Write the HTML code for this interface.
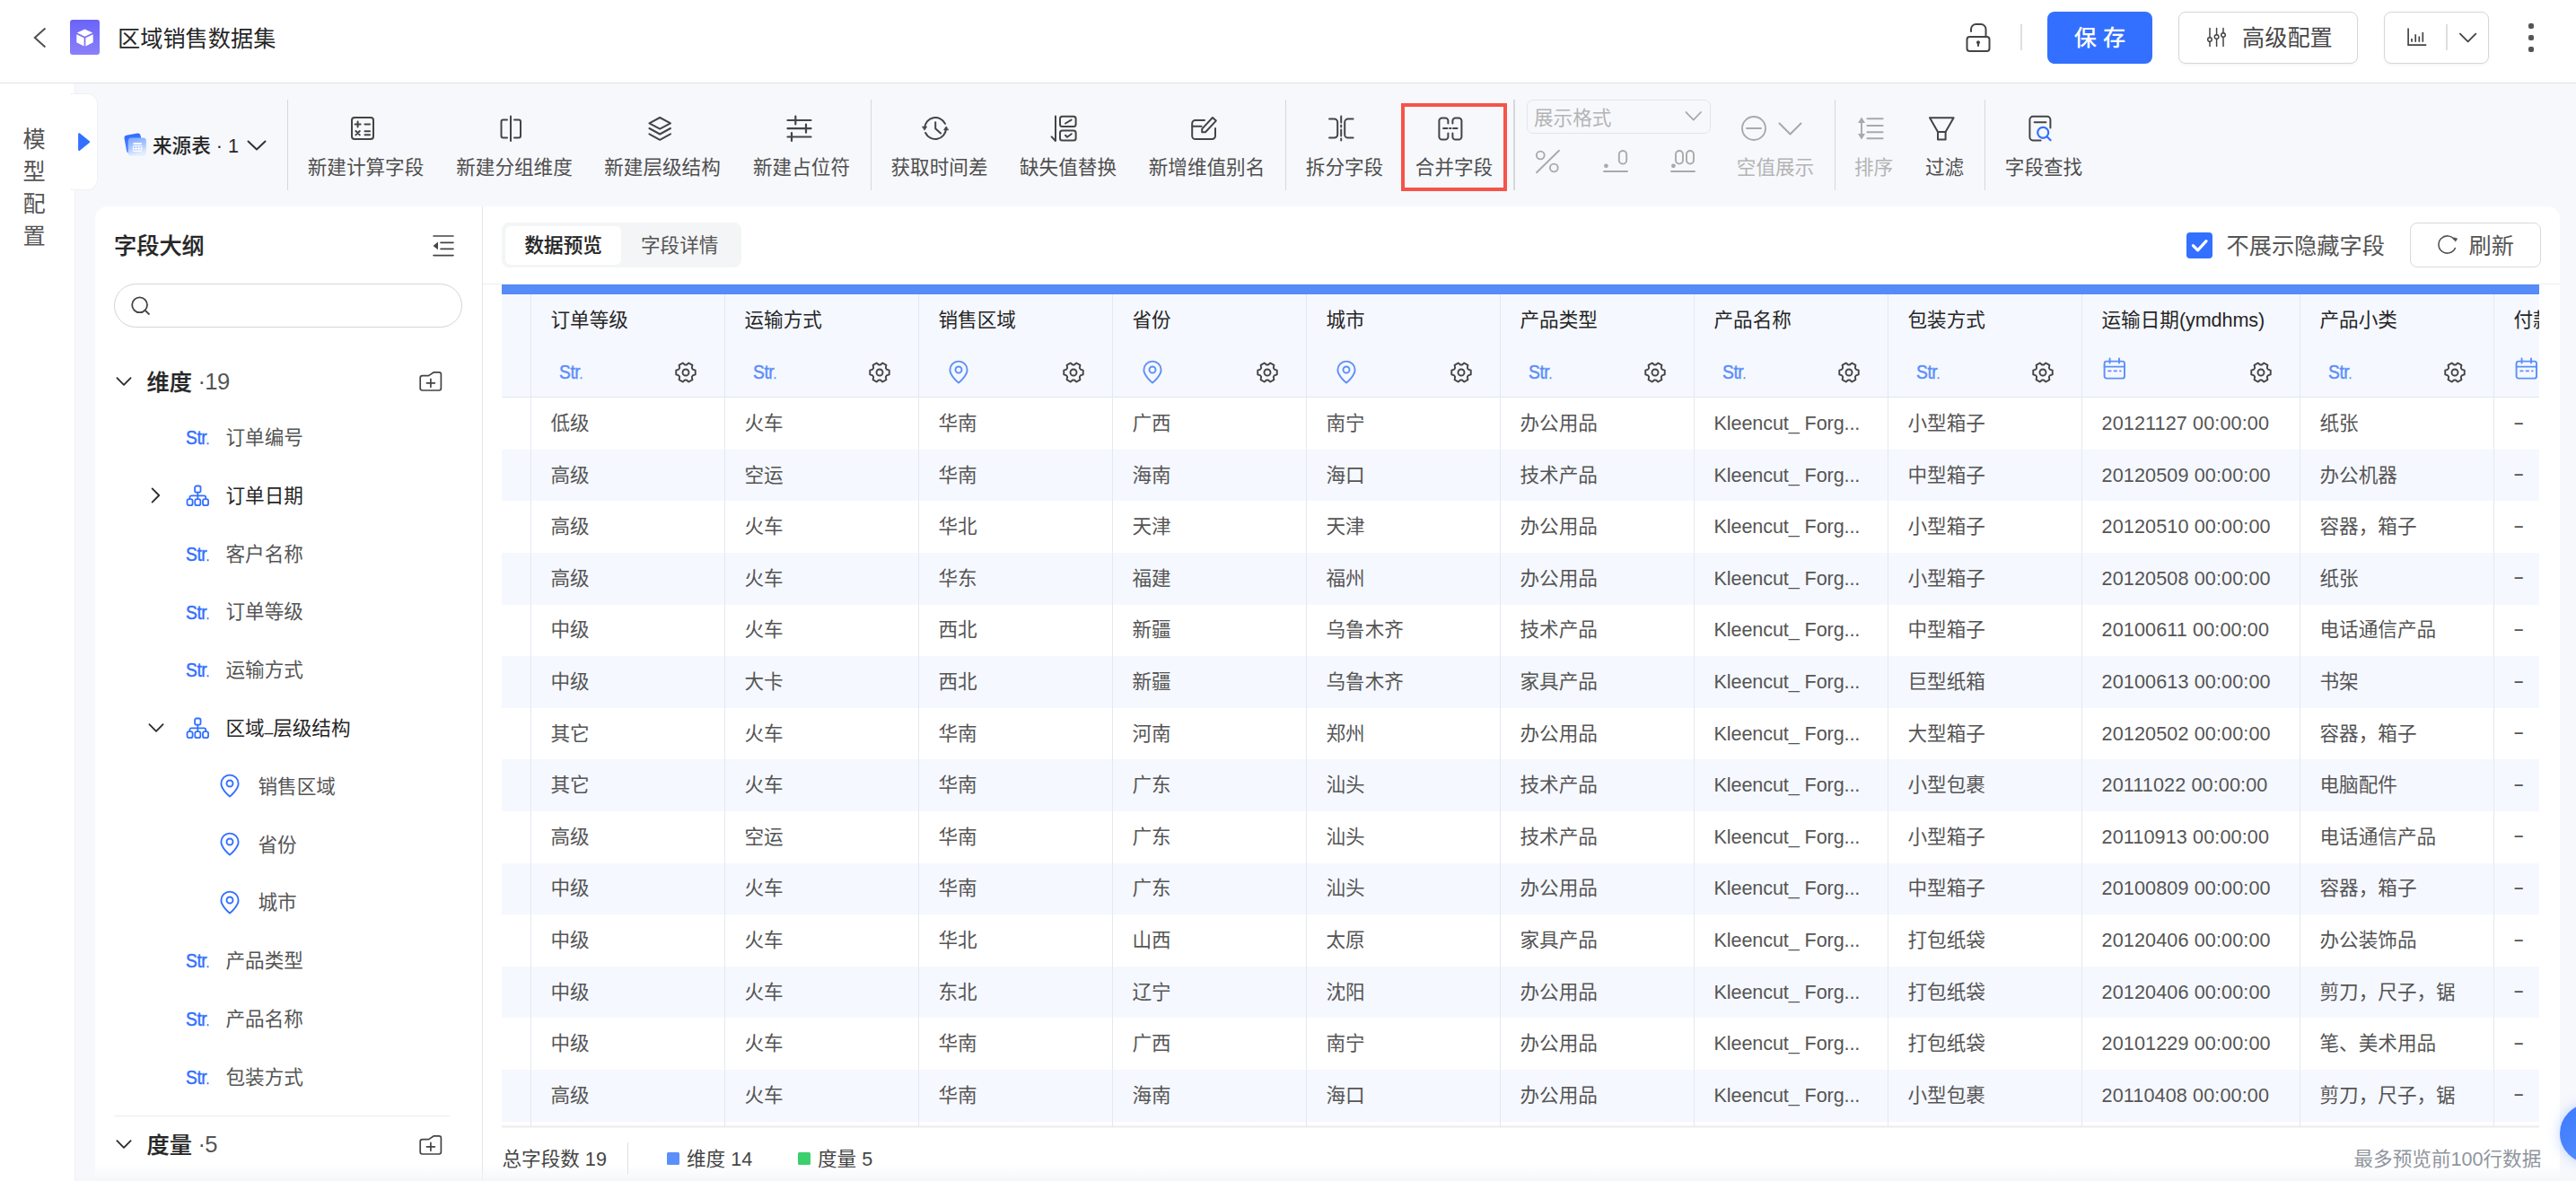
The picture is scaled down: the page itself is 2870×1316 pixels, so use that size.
<!DOCTYPE html>
<html lang="zh-CN"><head><meta charset="utf-8"><title>区域销售数据集</title>
<style>
*{box-sizing:border-box;margin:0;padding:0}
html,body{width:2870px;height:1316px;overflow:hidden}
body{background:#f7f8fc;font-family:"Liberation Sans","Noto Sans CJK SC",sans-serif;color:#262626;position:relative;-webkit-font-smoothing:antialiased}
.abs{position:absolute}
.t{position:absolute;white-space:nowrap;line-height:32px;height:32px}
svg{position:absolute;overflow:visible}
.hdr{position:absolute;left:0;top:0;width:2870px;height:93px;background:#fff;border-bottom:1px solid #e1e2e6}
.side{position:absolute;left:0;top:93px;width:83.5px;height:1223px;background:#fff;border-right:1px solid #f0f0f3}
.bulge{position:absolute;left:80px;top:104.5px;width:28px;height:106.5px;background:#fff;border-radius:0 11px 11px 0;box-shadow:0 0 0 1px #f1f1f3}
.vdiv{position:absolute;width:1.5px;background:#d6d8dc;top:111px;height:101px}
.lab{position:absolute;top:171.2px;height:32px;line-height:32px;font-size:21.6px;color:#4f4f4f;white-space:nowrap;transform:translateX(-50%)}
.lab.dis{color:#b4b4b4}
.panel{position:absolute;left:106px;top:230px;width:2746px;height:1100px;background:#fff;border-radius:14px}
.tree{position:absolute;font-size:21.6px;line-height:32px;height:32px;color:#555555;white-space:nowrap}
.tree.dk{color:#262626}
.str{position:absolute;font-size:22.4px;line-height:28px;height:28px;color:#3370ff;transform-origin:0 50%;transform:scaleX(.86);letter-spacing:-.5px;white-space:nowrap;-webkit-text-stroke:.45px #3370ff}
.str.h{color:#5b8ff9;-webkit-text-stroke:.45px #5b8ff9}
.th{position:absolute;font-size:21.6px;line-height:32px;height:32px;color:#262626;white-space:nowrap;top:341.2px}
.td{position:absolute;font-size:21.6px;line-height:32px;height:32px;color:#555555;white-space:nowrap}
.row{position:absolute;left:559px;width:2270px;height:57.6px}
.row.odd{background:#f5f8fe}
.cb{position:absolute;width:1px;top:327px;height:928px;background:#e4e8f0}
</style></head>
<body>
<div class="hdr"></div>
<svg style="left:30px;top:26px" width="32" height="32" viewBox="0 0 32 32" fill="none" stroke="#505050" stroke-width="2" stroke-linecap="round" stroke-linejoin="round" ><path d="M20.4 5.6 L8.8 16 L20.4 26.4" stroke-linecap="butt" stroke-linejoin="miter"/></svg>
<div class="abs" style="left:78px;top:22px;width:32.5px;height:39px;border-radius:3px;background:linear-gradient(180deg,#6a63f8 0%,#8a80fa 100%)"></div>
<svg style="left:85px;top:31.8px" width="20" height="20" viewBox="0 0 20 20" fill="none" stroke="none" stroke-width="2" stroke-linecap="round" stroke-linejoin="round" ><path d="M9.5 0.6 L18.2 4.6 L9.5 8.8 L0.8 4.6 Z" fill="#fff" stroke="none"/><path d="M0.3 6.2 L8.6 10.2 L8.6 19.4 L0.3 15.2 Z" fill="#fff" stroke="none"/><path d="M18.7 6.2 L10.4 10.2 L10.4 19.4 L18.7 15.2 Z" fill="#fff" stroke="none"/></svg>
<div class="t" style="left:131px;top:27.4px;font-size:25.2px;color:#262626">区域销售数据集</div>
<svg style="left:2186px;top:22px" width="36" height="40" viewBox="0 0 36 40" fill="none" stroke="#444444" stroke-width="2" stroke-linecap="round" stroke-linejoin="round" ><rect x="5.5" y="19" width="25" height="16" rx="3"/><path d="M10 13 V10.5 A5.5 5.5 0 0 1 15.5 5 H21 A5.5 5.5 0 0 1 26.5 10.5 V19"/><circle cx="18" cy="25.3" r="2" fill="#444444" stroke="none"/><path d="M18 26 V29"/></svg>
<div class="abs" style="left:2251px;top:27px;width:2px;height:29px;background:#dedfe3"></div>
<div class="abs" style="left:2281px;top:13px;width:117px;height:58px;border-radius:8px;background:#3370ff"></div>
<div class="t" style="left:2281px;width:117px;text-align:center;top:26px;font-size:25.2px;color:#fff;font-weight:500">保 存</div>
<div class="abs" style="left:2427px;top:13px;width:200px;height:58px;border-radius:8px;background:#fff;border:1.5px solid #d6d6d9;box-shadow:0 2px 3px rgba(0,0,0,.04)"></div>
<svg style="left:2456px;top:28px" width="28" height="28" viewBox="0 0 28 28" fill="none" stroke="#444444" stroke-width="1.5" stroke-linecap="round" stroke-linejoin="round" ><path d="M6 3.5 V13.5 M6 18.5 V23.5 M13.6 3.5 V10.5 M13.6 15.5 V23.5 M21 3.5 V8.5 M21 13.5 V23.5"/><circle cx="6" cy="16" r="2.3"/><circle cx="13.6" cy="13" r="2.3"/><circle cx="21" cy="11" r="2.3"/></svg>
<div class="t" style="left:2498px;top:26px;font-size:25.2px;color:#484848">高级配置</div>
<div class="abs" style="left:2656px;top:13px;width:117px;height:58px;border-radius:8px;background:#fff;border:1.5px solid #d6d6d9;box-shadow:0 2px 3px rgba(0,0,0,.04)"></div>
<svg style="left:2680px;top:30px" width="26" height="24" viewBox="0 0 26 24" fill="none" stroke="#444444" stroke-width="1.7" stroke-linecap="round" stroke-linejoin="round" ><path d="M3.1 2.4 V20.1 H22.4" stroke-linecap="square" stroke-linejoin="miter"/><path d="M7 13 V16.8 M11.2 8.3 V16.8 M15.3 10.4 V16.8 M19.3 6 V16.8" stroke-linecap="butt"/></svg>
<div class="abs" style="left:2725px;top:27px;width:2px;height:29px;background:#dedfe3"></div>
<svg style="left:2737px;top:34px" width="26" height="16" viewBox="0 0 26 16" fill="none" stroke="#444444" stroke-width="1.8" stroke-linecap="round" stroke-linejoin="round" ><path d="M3.4 3.2 L12.6 12.4 L21.8 3.2" stroke-linecap="butt"/></svg>
<div class="abs" style="left:2817px;top:25.8px;width:6.2px;height:6.2px;border-radius:2px;background:#555"></div>
<div class="abs" style="left:2817px;top:38.8px;width:6.2px;height:6.2px;border-radius:2px;background:#555"></div>
<div class="abs" style="left:2817px;top:51.8px;width:6.2px;height:6.2px;border-radius:2px;background:#555"></div>
<div class="side"></div><div class="bulge"></div><div class="abs" style="left:78px;top:105.5px;width:6px;height:104.5px;background:#fff"></div>
<div class="t" style="left:25.5px;top:138.6px;font-size:25.2px;color:#555555">模</div>
<div class="t" style="left:25.5px;top:174.6px;font-size:25.2px;color:#555555">型</div>
<div class="t" style="left:25.5px;top:210.6px;font-size:25.2px;color:#555555">配</div>
<div class="t" style="left:25.5px;top:246.6px;font-size:25.2px;color:#555555">置</div>
<svg style="left:86px;top:147px" width="16" height="22" viewBox="0 0 16 22" fill="none" stroke="none" stroke-width="2" stroke-linecap="round" stroke-linejoin="round" ><path d="M2.2 2.4 L13 11.2 L2.2 20 Z" fill="#3370ff" stroke="#3370ff" stroke-width="2.2" stroke-linejoin="round"/></svg>
<svg style="left:136px;top:146px" width="30" height="30" viewBox="0 0 30 30" fill="none" stroke="none" stroke-width="2" stroke-linecap="round" stroke-linejoin="round" ><defs><linearGradient id="sg1" x1="0" y1="0" x2="0" y2="1"><stop offset="0" stop-color="#2f6bff"/><stop offset="1" stop-color="#5a8dff"/></linearGradient><linearGradient id="sg2" x1="0" y1="0" x2="0.3" y2="1"><stop offset="0" stop-color="#7aa8ff"/><stop offset="0.55" stop-color="#a9c6ff"/><stop offset="1" stop-color="#e3edff"/></linearGradient></defs><rect x="3.6" y="3.4" width="18.4" height="20" rx="3" transform="rotate(-10 12.8 13.4)" fill="url(#sg1)" stroke="none"/><rect x="6.8" y="7.6" width="20.2" height="19.8" rx="3.6" fill="url(#sg2)" stroke="none"/><path d="M12.6 14 H21.6" stroke="#fff" stroke-width="2" stroke-linecap="butt"/><path d="M12.4 16.6 H21.8 V22.4 H12.4 Z M12.4 19.5 H21.8 M15.5 16.6 V22.4 M18.7 16.6 V22.4" stroke="#fff" stroke-width="1" stroke-linecap="butt" stroke-linejoin="miter"/></svg>
<div class="t" style="left:170px;top:146.8px;font-size:21.6px;font-weight:500;color:#262626">来源表 · 1</div>
<svg style="left:274px;top:155px" width="24" height="14" viewBox="0 0 24 14" fill="none" stroke="#333333" stroke-width="2" stroke-linecap="round" stroke-linejoin="round" ><path d="M2.5 2.5 L12 11.5 L21.5 2.5"/></svg>
<div class="vdiv" style="left:319.5px"></div>
<div class="vdiv" style="left:969.5px"></div>
<div class="vdiv" style="left:1431.5px"></div>
<div class="vdiv" style="left:1686px"></div>
<div class="vdiv" style="left:2043.5px"></div>
<div class="vdiv" style="left:2210.5px"></div>
<svg style="left:390px;top:129px" width="28" height="28" viewBox="0 0 28 28" fill="none" stroke="#444444" stroke-width="2" stroke-linecap="round" stroke-linejoin="round" ><rect x="2" y="2" width="24" height="24" rx="3"/><path d="M5.6 9.6 H11.6 M8.6 6.6 V12.6 M16.5 9.6 H22 M6.4 17 L10.8 21.4 M10.8 17 L6.4 21.4 M16.5 17.3 H22 M16.5 21.3 H22"/></svg>
<div class="lab" style="left:407.5px">新建计算字段</div>
<svg style="left:555px;top:127px" width="28" height="32" viewBox="0 0 28 32" fill="none" stroke="#444444" stroke-width="2" stroke-linecap="round" stroke-linejoin="round" ><path d="M10 6.5 H5.5 A2 2 0 0 0 3.5 8.5 V24.5 A2 2 0 0 0 5.5 26.5 H10"/><path d="M18 6.5 H23 A2 2 0 0 1 25 8.5 V24.5 A2 2 0 0 1 23 26.5 H18"/><path d="M14 2.5 V30"/></svg>
<div class="lab" style="left:573px">新建分组维度</div>
<svg style="left:721px;top:128px" width="28" height="30" viewBox="0 0 28 30" fill="none" stroke="#444444" stroke-width="2" stroke-linecap="round" stroke-linejoin="round" ><path d="M14.2 3 L26 9.3 L14.2 15.6 L2.4 9.3 Z"/><path d="M2.4 15 L14.2 21.5 L26 15"/><path d="M2.4 21.3 L14.2 27.8 L26 21.3"/></svg>
<div class="lab" style="left:738px">新建层级结构</div>
<svg style="left:875px;top:127px" width="30" height="32" viewBox="0 0 30 32" fill="none" stroke="#444444" stroke-width="2.2" stroke-linecap="round" stroke-linejoin="round" ><path d="M2.5 7 H28.5 M2.5 16.2 H28.5 M2.5 25.5 H28.5"/><path d="M11.3 2.5 V11.5 M23 11.7 V20.7 M7 21 V30"/></svg>
<div class="lab" style="left:893px">新建占位符</div>
<svg style="left:1026px;top:128px" width="32" height="30" viewBox="0 0 32 30" fill="none" stroke="#444444" stroke-width="2" stroke-linecap="round" stroke-linejoin="round" ><path d="M27 9.9 A12 12 0 0 0 4.2 14.4"/><path d="M5.1 20 A12 12 0 0 0 28 15.6"/><path d="M1.8 13.2 L6.6 13.2 L4.2 16.8 Z" fill="#444444" stroke-width=".8"/><path d="M30.4 16.8 L25.6 16.8 L28 13.2 Z" fill="#444444" stroke-width=".8"/><path d="M16.2 8.3 V15.2 L22 20.6"/></svg>
<div class="lab" style="left:1046.5px">获取时间差</div>
<svg style="left:1168px;top:127px" width="32" height="32" viewBox="0 0 32 32" fill="none" stroke="#444444" stroke-width="2" stroke-linecap="round" stroke-linejoin="round" ><path d="M8 2.5 V30 L3.6 25.4"/><rect x="13" y="2.8" width="17.6" height="11.2" rx="2.5"/><rect x="13" y="18.4" width="17.6" height="11.2" rx="2.5"/><path d="M19 10.5 L25.6 6.6"/><path d="M19 23.7 L21 25.8 L25.8 22.2"/></svg>
<div class="lab" style="left:1190px">缺失值替换</div>
<svg style="left:1325px;top:128px" width="32" height="30" viewBox="0 0 32 30" fill="none" stroke="#444444" stroke-width="2" stroke-linecap="round" stroke-linejoin="round" ><path d="M17 6 H6.8 A3.6 3.6 0 0 0 3.2 9.6 V23.4 A3.6 3.6 0 0 0 6.8 27 H25.4 A3.6 3.6 0 0 0 29 23.4 V15"/><path d="M3.4 12.8 H13.6"/><path d="M26 3 L29.8 6.6 L18 19.2 H14.2 V15.6 Z"/></svg>
<div class="lab" style="left:1344.5px">新增维值别名</div>
<svg style="left:1478px;top:127px" width="32" height="32" viewBox="0 0 32 32" fill="none" stroke="#444444" stroke-width="2" stroke-linecap="round" stroke-linejoin="round" ><path d="M3 5.6 H8.6 A3.6 3.6 0 0 1 12.2 9.2 V23 A3.6 3.6 0 0 1 8.6 26.6 H3"/><path d="M29.6 5.6 H23.8 A3.6 3.6 0 0 0 20.2 9.2 V23 A3.6 3.6 0 0 0 23.8 26.6 H29.6"/><path d="M16.2 2.5 V30" stroke-dasharray="7 3 2 3"/></svg>
<div class="lab" style="left:1498px">拆分字段</div>
<div class="abs" style="left:1561px;top:115px;width:118px;height:98px;border:4px solid #f5544a"></div>
<svg style="left:1601px;top:128px" width="30" height="30" viewBox="0 0 30 30" fill="none" stroke="#444444" stroke-width="2" stroke-linecap="round" stroke-linejoin="round" ><path d="M12.4 9.6 V6.6 A3.2 3.2 0 0 0 9.2 3.4 H5.6 A3.2 3.2 0 0 0 2.4 6.6 V24.4 A3.2 3.2 0 0 0 5.6 27.6 H9.2 A3.2 3.2 0 0 0 12.4 24.4 V20.4"/><path d="M17.4 9.6 V6.6 A3.2 3.2 0 0 1 20.6 3.4 H24.2 A3.2 3.2 0 0 1 27.4 6.6 V24.4 A3.2 3.2 0 0 1 24.2 27.6 H20.6 A3.2 3.2 0 0 1 17.4 24.4 V20.4"/><path d="M7 15 H23.4" stroke-dasharray="4.6 2.4 1.6 2.4" stroke-width="1.8"/></svg>
<div class="lab" style="left:1620px">合并字段</div>
<div class="abs" style="left:1701px;top:111px;width:205px;height:38px;border:1.5px solid #e3e5ea;border-radius:7px"></div>
<div class="t" style="left:1709px;top:115.6px;font-size:21.6px;color:#b4b4b4">展示格式</div>
<svg style="left:1876px;top:122px" width="22" height="16" viewBox="0 0 22 16" fill="none" stroke="#a9a9a9" stroke-width="1.8" stroke-linecap="round" stroke-linejoin="round" ><path d="M2.5 3 L10.8 11.6 L19 3"/></svg>
<svg style="left:1710px;top:166px" width="30" height="28" viewBox="0 0 30 28" fill="none" stroke="#a9a9a9" stroke-width="1.9" stroke-linecap="round" stroke-linejoin="round" ><path d="M2 26.2 L27 1.8"/><circle cx="6.3" cy="7" r="4.4"/><circle cx="21.3" cy="21" r="4.4"/></svg>
<svg style="left:1785px;top:165px" width="30" height="28" viewBox="0 0 30 28" fill="none" stroke="#a9a9a9" stroke-width="1.9" stroke-linecap="round" stroke-linejoin="round" ><circle cx="4.4" cy="19.8" r="2.4" fill="#a9a9a9" stroke="none"/><rect x="18.8" y="3" width="8.4" height="14.6" rx="4.2"/><path d="M2 26 H28"/></svg>
<svg style="left:1860px;top:165px" width="30" height="28" viewBox="0 0 30 28" fill="none" stroke="#a9a9a9" stroke-width="1.9" stroke-linecap="round" stroke-linejoin="round" ><circle cx="4.4" cy="19.8" r="2.4" fill="#a9a9a9" stroke="none"/><rect x="7" y="3" width="8" height="14.6" rx="4"/><rect x="19" y="3" width="8" height="14.6" rx="4"/><path d="M2 26 H28"/></svg>
<svg style="left:1939px;top:128px" width="30" height="30" viewBox="0 0 30 30" fill="none" stroke="#a9a9a9" stroke-width="1.9" stroke-linecap="round" stroke-linejoin="round" ><circle cx="15" cy="15" r="13"/><path d="M7 15 H23"/></svg>
<svg style="left:1980px;top:135px" width="28" height="18" viewBox="0 0 28 18" fill="none" stroke="#a9a9a9" stroke-width="2" stroke-linecap="round" stroke-linejoin="round" ><path d="M2.5 2.5 L14.5 14.5 L26.5 2.5"/></svg>
<div class="lab dis" style="left:1978px">空值展示</div>
<svg style="left:2068px;top:129px" width="32" height="28" viewBox="0 0 32 28" fill="none" stroke="#a9a9a9" stroke-width="1.9" stroke-linecap="round" stroke-linejoin="round" ><path d="M6 6 V22"/><path d="M6 1.6 L10 8 H2 Z M6 26.4 L10 20 H2 Z" fill="#a9a9a9" stroke="none"/><path d="M12.4 3.2 H29.6 M12.4 11 H29.6 M12.4 18.2 H29.6 M12.4 25.2 H29.6"/></svg>
<div class="lab dis" style="left:2087.5px">排序</div>
<svg style="left:2147px;top:128px" width="32" height="30" viewBox="0 0 32 30" fill="none" stroke="#444444" stroke-width="2" stroke-linecap="round" stroke-linejoin="round" ><path d="M3 3.2 H29.6 L20.6 19 H12 Z"/><path d="M12 19 V27.4 H20.6 V19"/></svg>
<div class="lab" style="left:2166.5px">过滤</div>
<svg style="left:2258px;top:127px" width="30" height="32" viewBox="0 0 30 32" fill="none" stroke="#444444" stroke-width="2" stroke-linecap="round" stroke-linejoin="round" ><path d="M15.6 29.4 H7 A3.6 3.6 0 0 1 3.4 25.8 V6.4 A3.6 3.6 0 0 1 7 2.8 H22.8 A3.6 3.6 0 0 1 26.4 6.4 V15.4"/><path d="M8.6 9.2 H21.4"/><circle cx="18.2" cy="20.8" r="6" stroke="#3370ff" stroke-width="2.2"/><path d="M22.6 25.2 L26.6 29.2" stroke="#3370ff" stroke-width="2.2"/></svg>
<div class="lab" style="left:2277px">字段查找</div>
<div class="panel"></div>
<div class="abs" style="left:537px;top:230px;width:1px;height:1090px;background:#e4e5e8"></div>
<div class="abs" style="left:538px;top:316px;width:2314px;height:1px;background:#eeeff1"></div>
<div class="t" style="left:127px;top:258px;font-size:25.2px;font-weight:500;-webkit-text-stroke:.2px #262626;color:#262626">字段大纲</div>
<svg style="left:480px;top:260px" width="28" height="28" viewBox="0 0 28 28" fill="none" stroke="#444444" stroke-width="1.6" stroke-linecap="round" stroke-linejoin="round" ><path d="M3 3 H25 M11 10.4 H25 M11 17.4 H25 M3 24.6 H25"/><path d="M8 9.6 V18.2 L2.6 13.9 Z" fill="#444444" stroke="none"/></svg>
<div class="abs" style="left:127px;top:316px;width:388px;height:49px;border:1.5px solid #d4d4d6;border-radius:25px;background:#fff"></div>
<svg style="left:144px;top:329px" width="26" height="26" viewBox="0 0 26 26" fill="none" stroke="#444444" stroke-width="1.8" stroke-linecap="round" stroke-linejoin="round" ><circle cx="11.6" cy="10.8" r="8.4"/><path d="M17.8 17 L22 21"/></svg>
<svg style="left:127.5px;top:418.5px" width="20" height="14" viewBox="0 0 20 14" fill="none" stroke="#2b2b2b" stroke-width="1.8" stroke-linecap="round" stroke-linejoin="round" ><path d="M2.4 2.2 L10 9.8 L17.6 2.2"/></svg>
<div class="t" style="left:163.5px;top:409.5px;font-size:25.2px;font-weight:500;-webkit-text-stroke:.2px #262626;color:#262626">维度<span style="font-weight:400;-webkit-text-stroke:0;color:#555555;margin-left:6.5px;font-size:25.6px;letter-spacing:-.6px;position:relative;top:-.8px">·19</span></div>
<svg style="left:465.5px;top:411.5px" width="28" height="26" viewBox="0 0 28 26" fill="none" stroke="#444444" stroke-width="1.7" stroke-linecap="round" stroke-linejoin="round" ><path d="M11.6 6.6 H4.6 A2.4 2.4 0 0 0 2.2 9 V20.6 A2.4 2.4 0 0 0 4.6 23 H23 A2.4 2.4 0 0 0 25.4 20.6 V5 A2.2 2.2 0 0 0 23.2 2.8 H17.4 Z"/><path d="M9.4 14.8 H18.4 M13.9 10.4 V19.2"/></svg>
<div class="str" style="left:207px;top:474.1px">Str<span style="font-size:14px;margin-left:-.6px">.</span></div>
<div class="tree" style="left:251.5px;top:472.0px">订单编号</div>
<svg style="left:206.5px;top:539.9px" width="26.6" height="24.7" viewBox="0 0 28 26" fill="none" stroke="#3370ff" stroke-width="1.9" stroke-linecap="round" stroke-linejoin="round" preserveAspectRatio="none"><rect x="10.6" y="1.6" width="6.8" height="7.4" rx="2"/><path d="M14 9 V13 M4.6 17 V15 A2 2 0 0 1 6.6 13 H21.4 A2 2 0 0 1 23.4 15 V17 M14 13 V17"/><rect x="1.6" y="17" width="6.4" height="7.4" rx="2.4"/><rect x="10.8" y="17" width="6.4" height="7.4" rx="2.4"/><rect x="20" y="17" width="6.4" height="7.4" rx="2.4"/></svg>
<svg style="left:167px;top:542.4px" width="14" height="20" viewBox="0 0 14 20" fill="none" stroke="#2b2b2b" stroke-width="1.8" stroke-linecap="round" stroke-linejoin="round" ><path d="M2.6 2.4 L10.2 10 L2.6 17.6"/></svg>
<div class="tree dk" style="left:251.5px;top:536.8px">订单日期</div>
<div class="str" style="left:207px;top:603.7px">Str<span style="font-size:14px;margin-left:-.6px">.</span></div>
<div class="tree" style="left:251.5px;top:601.6px">客户名称</div>
<div class="str" style="left:207px;top:668.5px">Str<span style="font-size:14px;margin-left:-.6px">.</span></div>
<div class="tree" style="left:251.5px;top:666.4px">订单等级</div>
<div class="str" style="left:207px;top:733.3px">Str<span style="font-size:14px;margin-left:-.6px">.</span></div>
<div class="tree" style="left:251.5px;top:731.2px">运输方式</div>
<svg style="left:206.5px;top:799.1px" width="26.6" height="24.7" viewBox="0 0 28 26" fill="none" stroke="#3370ff" stroke-width="1.9" stroke-linecap="round" stroke-linejoin="round" preserveAspectRatio="none"><rect x="10.6" y="1.6" width="6.8" height="7.4" rx="2"/><path d="M14 9 V13 M4.6 17 V15 A2 2 0 0 1 6.6 13 H21.4 A2 2 0 0 1 23.4 15 V17 M14 13 V17"/><rect x="1.6" y="17" width="6.4" height="7.4" rx="2.4"/><rect x="10.8" y="17" width="6.4" height="7.4" rx="2.4"/><rect x="20" y="17" width="6.4" height="7.4" rx="2.4"/></svg>
<svg style="left:164px;top:804.6px" width="20" height="14" viewBox="0 0 20 14" fill="none" stroke="#2b2b2b" stroke-width="1.8" stroke-linecap="round" stroke-linejoin="round" ><path d="M2.4 2.2 L10 9.8 L17.6 2.2"/></svg>
<div class="tree dk" style="left:251.5px;top:796.0px">区域<span style="font-size:17px;position:relative;top:-4.5px">_</span>层级结构</div>
<svg style="left:244px;top:862.1px" width="24" height="28" viewBox="0 0 24 28" fill="none" stroke="#3370ff" stroke-width="1.9" stroke-linecap="round" stroke-linejoin="round" ><path d="M12 25.6 C12 25.6 2.4 17.6 2.4 11.2 A9.6 9.6 0 0 1 21.6 11.2 C21.6 17.6 12 25.6 12 25.6 Z"/><circle cx="12" cy="11" r="3.5"/></svg>
<div class="tree" style="left:287.5px;top:860.8px">销售区域</div>
<svg style="left:244px;top:926.9000000000001px" width="24" height="28" viewBox="0 0 24 28" fill="none" stroke="#3370ff" stroke-width="1.9" stroke-linecap="round" stroke-linejoin="round" ><path d="M12 25.6 C12 25.6 2.4 17.6 2.4 11.2 A9.6 9.6 0 0 1 21.6 11.2 C21.6 17.6 12 25.6 12 25.6 Z"/><circle cx="12" cy="11" r="3.5"/></svg>
<div class="tree" style="left:287.5px;top:925.6px">省份</div>
<svg style="left:244px;top:991.7px" width="24" height="28" viewBox="0 0 24 28" fill="none" stroke="#3370ff" stroke-width="1.9" stroke-linecap="round" stroke-linejoin="round" ><path d="M12 25.6 C12 25.6 2.4 17.6 2.4 11.2 A9.6 9.6 0 0 1 21.6 11.2 C21.6 17.6 12 25.6 12 25.6 Z"/><circle cx="12" cy="11" r="3.5"/></svg>
<div class="tree" style="left:287.5px;top:990.4px">城市</div>
<div class="str" style="left:207px;top:1057.3px">Str<span style="font-size:14px;margin-left:-.6px">.</span></div>
<div class="tree" style="left:251.5px;top:1055.2px">产品类型</div>
<div class="str" style="left:207px;top:1122.1px">Str<span style="font-size:14px;margin-left:-.6px">.</span></div>
<div class="tree" style="left:251.5px;top:1120.0px">产品名称</div>
<div class="str" style="left:207px;top:1186.9px">Str<span style="font-size:14px;margin-left:-.6px">.</span></div>
<div class="tree" style="left:251.5px;top:1184.8px">包装方式</div>
<div class="abs" style="left:127px;top:1242.5px;width:374px;height:1.5px;background:#ebecef"></div>
<svg style="left:127.5px;top:1269px" width="20" height="14" viewBox="0 0 20 14" fill="none" stroke="#2b2b2b" stroke-width="1.8" stroke-linecap="round" stroke-linejoin="round" ><path d="M2.4 2.2 L10 9.8 L17.6 2.2"/></svg>
<div class="t" style="left:163.5px;top:1259.5px;font-size:25.2px;font-weight:500;-webkit-text-stroke:.2px #262626;color:#262626">度量<span style="font-weight:400;-webkit-text-stroke:0;color:#555555;margin-left:6.5px;font-size:25.6px;letter-spacing:-.6px;position:relative;top:-.8px">·5</span></div>
<svg style="left:465.5px;top:1262.5px" width="28" height="26" viewBox="0 0 28 26" fill="none" stroke="#444444" stroke-width="1.7" stroke-linecap="round" stroke-linejoin="round" ><path d="M11.6 6.6 H4.6 A2.4 2.4 0 0 0 2.2 9 V20.6 A2.4 2.4 0 0 0 4.6 23 H23 A2.4 2.4 0 0 0 25.4 20.6 V5 A2.2 2.2 0 0 0 23.2 2.8 H17.4 Z"/><path d="M9.4 14.8 H18.4 M13.9 10.4 V19.2"/></svg>
<div class="abs" style="left:559px;top:248px;width:267px;height:50px;border-radius:8px;background:#f4f5f6"></div>
<div class="abs" style="left:563px;top:251.5px;width:129px;height:43px;border-radius:6px;background:#fff"></div>
<div class="t" style="left:584.5px;top:258.3px;font-size:21.6px;font-weight:500;-webkit-text-stroke:.2px #262626;color:#262626">数据预览</div>
<div class="t" style="left:714px;top:258.3px;font-size:21.6px;color:#555555">字段详情</div>
<div class="abs" style="left:2436px;top:259px;width:29px;height:29px;border-radius:4px;background:#3370ff"></div>
<svg style="left:2436px;top:259px" width="29" height="29" viewBox="0 0 29 29" fill="none" stroke="#fff" stroke-width="3.2" stroke-linecap="round" stroke-linejoin="round" ><path d="M7.4 14.6 L12.6 19.8 L22 9.6"/></svg>
<div class="t" style="left:2480.5px;top:257.5px;font-size:25.2px;color:#555">不展示隐藏字段</div>
<div class="abs" style="left:2685px;top:248px;width:146px;height:50px;border-radius:8px;background:#fff;border:1.5px solid #d9d9dc"></div>
<svg style="left:2715px;top:261px" width="26" height="26" viewBox="0 0 26 26" fill="none" stroke="#555" stroke-width="1.6" stroke-linecap="round" stroke-linejoin="round" ><path d="M19.46 6 A9.6 9.6 0 1 0 20.3 15.56"/><path d="M18.4 3.2 L23.2 4.8 L20.6 8.8 Z" fill="#555" stroke="none"/></svg>
<div class="t" style="left:2750.5px;top:257.5px;font-size:25.2px;color:#555">刷新</div>
<div class="abs" style="left:559px;top:317px;width:2270px;height:11px;background:#568bf8"></div>
<div class="abs" style="left:559px;top:328px;width:2270px;height:115px;background:#f5f8fe;border-bottom:1px solid #e0e5ee"></div>
<div class="row odd" style="top:501px;height:57px"></div>
<div class="row odd" style="top:616px;height:58px"></div>
<div class="row odd" style="top:731px;height:58px"></div>
<div class="row odd" style="top:846px;height:58px"></div>
<div class="row odd" style="top:962px;height:57px"></div>
<div class="row odd" style="top:1077px;height:57px"></div>
<div class="row odd" style="top:1192px;height:58px"></div>
<div class="abs" style="left:559px;top:1253.5px;width:2270px;height:3px;background:linear-gradient(180deg,#f6f6f7,#ededee 50%,#f8f8f9)"></div>
<div class="abs" style="left:559px;top:316px;width:2270px;height:945px;overflow:hidden">
<div class="cb" style="left:32.0px;top:12px"></div>
<div class="cb" style="left:248.0px;top:12px"></div>
<div class="cb" style="left:464.0px;top:12px"></div>
<div class="cb" style="left:680.0px;top:12px"></div>
<div class="cb" style="left:896.0px;top:12px"></div>
<div class="cb" style="left:1112.0px;top:12px"></div>
<div class="cb" style="left:1328.0px;top:12px"></div>
<div class="cb" style="left:1544.0px;top:12px"></div>
<div class="cb" style="left:1760.0px;top:12px"></div>
<div class="cb" style="left:2003.0px;top:12px"></div>
<div class="cb" style="left:2219.0px;top:12px"></div>
</div>
<div class="abs" style="left:0;top:0;width:2829px;height:1316px;overflow:hidden">
<div class="th" style="left:613.5px">订单等级</div>
<div class="str h" style="left:622.5px;top:401px">Str<span style="font-size:14px;margin-left:-.6px">.</span></div>
<svg style="left:751px;top:401.5px" width="26" height="26" viewBox="0 0 26 26" fill="none" stroke="#444444" stroke-width="1.9" stroke-linecap="round" stroke-linejoin="round" ><path d="M23.74 10.62 L23.74 15.38 L20.80 16.39 L19.83 18.06 L20.43 21.11 L16.31 23.49 L13.96 21.45 L12.04 21.45 L9.69 23.49 L5.57 21.11 L6.17 18.06 L5.20 16.39 L2.26 15.38 L2.26 10.62 L5.20 9.61 L6.17 7.94 L5.57 4.89 L9.69 2.51 L12.04 4.55 L13.96 4.55 L16.31 2.51 L20.43 4.89 L19.83 7.94 L20.80 9.61 Z" stroke-linejoin="round"/><circle cx="13" cy="13" r="3.5"/></svg>
<div class="td" style="left:613.5px;top:455.9px">低级</div>
<div class="td" style="left:613.5px;top:513.5px">高级</div>
<div class="td" style="left:613.5px;top:571.1px">高级</div>
<div class="td" style="left:613.5px;top:628.7px">高级</div>
<div class="td" style="left:613.5px;top:686.3px">中级</div>
<div class="td" style="left:613.5px;top:743.9px">中级</div>
<div class="td" style="left:613.5px;top:801.5px">其它</div>
<div class="td" style="left:613.5px;top:859.1px">其它</div>
<div class="td" style="left:613.5px;top:916.7px">高级</div>
<div class="td" style="left:613.5px;top:974.3px">中级</div>
<div class="td" style="left:613.5px;top:1031.9px">中级</div>
<div class="td" style="left:613.5px;top:1089.5px">中级</div>
<div class="td" style="left:613.5px;top:1147.1px">中级</div>
<div class="td" style="left:613.5px;top:1204.7px">高级</div>
<div class="th" style="left:829.5px">运输方式</div>
<div class="str h" style="left:838.5px;top:401px">Str<span style="font-size:14px;margin-left:-.6px">.</span></div>
<svg style="left:967px;top:401.5px" width="26" height="26" viewBox="0 0 26 26" fill="none" stroke="#444444" stroke-width="1.9" stroke-linecap="round" stroke-linejoin="round" ><path d="M23.74 10.62 L23.74 15.38 L20.80 16.39 L19.83 18.06 L20.43 21.11 L16.31 23.49 L13.96 21.45 L12.04 21.45 L9.69 23.49 L5.57 21.11 L6.17 18.06 L5.20 16.39 L2.26 15.38 L2.26 10.62 L5.20 9.61 L6.17 7.94 L5.57 4.89 L9.69 2.51 L12.04 4.55 L13.96 4.55 L16.31 2.51 L20.43 4.89 L19.83 7.94 L20.80 9.61 Z" stroke-linejoin="round"/><circle cx="13" cy="13" r="3.5"/></svg>
<div class="td" style="left:829.5px;top:455.9px">火车</div>
<div class="td" style="left:829.5px;top:513.5px">空运</div>
<div class="td" style="left:829.5px;top:571.1px">火车</div>
<div class="td" style="left:829.5px;top:628.7px">火车</div>
<div class="td" style="left:829.5px;top:686.3px">火车</div>
<div class="td" style="left:829.5px;top:743.9px">大卡</div>
<div class="td" style="left:829.5px;top:801.5px">火车</div>
<div class="td" style="left:829.5px;top:859.1px">火车</div>
<div class="td" style="left:829.5px;top:916.7px">空运</div>
<div class="td" style="left:829.5px;top:974.3px">火车</div>
<div class="td" style="left:829.5px;top:1031.9px">火车</div>
<div class="td" style="left:829.5px;top:1089.5px">火车</div>
<div class="td" style="left:829.5px;top:1147.1px">火车</div>
<div class="td" style="left:829.5px;top:1204.7px">火车</div>
<div class="th" style="left:1045.5px">销售区域</div>
<svg style="left:1055.5px;top:400.5px" width="24" height="28" viewBox="0 0 24 28" fill="none" stroke="#5b8ff9" stroke-width="1.9" stroke-linecap="round" stroke-linejoin="round" ><path d="M12 25.6 C12 25.6 2.4 17.6 2.4 11.2 A9.6 9.6 0 0 1 21.6 11.2 C21.6 17.6 12 25.6 12 25.6 Z"/><circle cx="12" cy="11" r="3.5"/></svg>
<svg style="left:1183px;top:401.5px" width="26" height="26" viewBox="0 0 26 26" fill="none" stroke="#444444" stroke-width="1.9" stroke-linecap="round" stroke-linejoin="round" ><path d="M23.74 10.62 L23.74 15.38 L20.80 16.39 L19.83 18.06 L20.43 21.11 L16.31 23.49 L13.96 21.45 L12.04 21.45 L9.69 23.49 L5.57 21.11 L6.17 18.06 L5.20 16.39 L2.26 15.38 L2.26 10.62 L5.20 9.61 L6.17 7.94 L5.57 4.89 L9.69 2.51 L12.04 4.55 L13.96 4.55 L16.31 2.51 L20.43 4.89 L19.83 7.94 L20.80 9.61 Z" stroke-linejoin="round"/><circle cx="13" cy="13" r="3.5"/></svg>
<div class="td" style="left:1045.5px;top:455.9px">华南</div>
<div class="td" style="left:1045.5px;top:513.5px">华南</div>
<div class="td" style="left:1045.5px;top:571.1px">华北</div>
<div class="td" style="left:1045.5px;top:628.7px">华东</div>
<div class="td" style="left:1045.5px;top:686.3px">西北</div>
<div class="td" style="left:1045.5px;top:743.9px">西北</div>
<div class="td" style="left:1045.5px;top:801.5px">华南</div>
<div class="td" style="left:1045.5px;top:859.1px">华南</div>
<div class="td" style="left:1045.5px;top:916.7px">华南</div>
<div class="td" style="left:1045.5px;top:974.3px">华南</div>
<div class="td" style="left:1045.5px;top:1031.9px">华北</div>
<div class="td" style="left:1045.5px;top:1089.5px">东北</div>
<div class="td" style="left:1045.5px;top:1147.1px">华南</div>
<div class="td" style="left:1045.5px;top:1204.7px">华南</div>
<div class="th" style="left:1261.5px">省份</div>
<svg style="left:1271.5px;top:400.5px" width="24" height="28" viewBox="0 0 24 28" fill="none" stroke="#5b8ff9" stroke-width="1.9" stroke-linecap="round" stroke-linejoin="round" ><path d="M12 25.6 C12 25.6 2.4 17.6 2.4 11.2 A9.6 9.6 0 0 1 21.6 11.2 C21.6 17.6 12 25.6 12 25.6 Z"/><circle cx="12" cy="11" r="3.5"/></svg>
<svg style="left:1399px;top:401.5px" width="26" height="26" viewBox="0 0 26 26" fill="none" stroke="#444444" stroke-width="1.9" stroke-linecap="round" stroke-linejoin="round" ><path d="M23.74 10.62 L23.74 15.38 L20.80 16.39 L19.83 18.06 L20.43 21.11 L16.31 23.49 L13.96 21.45 L12.04 21.45 L9.69 23.49 L5.57 21.11 L6.17 18.06 L5.20 16.39 L2.26 15.38 L2.26 10.62 L5.20 9.61 L6.17 7.94 L5.57 4.89 L9.69 2.51 L12.04 4.55 L13.96 4.55 L16.31 2.51 L20.43 4.89 L19.83 7.94 L20.80 9.61 Z" stroke-linejoin="round"/><circle cx="13" cy="13" r="3.5"/></svg>
<div class="td" style="left:1261.5px;top:455.9px">广西</div>
<div class="td" style="left:1261.5px;top:513.5px">海南</div>
<div class="td" style="left:1261.5px;top:571.1px">天津</div>
<div class="td" style="left:1261.5px;top:628.7px">福建</div>
<div class="td" style="left:1261.5px;top:686.3px">新疆</div>
<div class="td" style="left:1261.5px;top:743.9px">新疆</div>
<div class="td" style="left:1261.5px;top:801.5px">河南</div>
<div class="td" style="left:1261.5px;top:859.1px">广东</div>
<div class="td" style="left:1261.5px;top:916.7px">广东</div>
<div class="td" style="left:1261.5px;top:974.3px">广东</div>
<div class="td" style="left:1261.5px;top:1031.9px">山西</div>
<div class="td" style="left:1261.5px;top:1089.5px">辽宁</div>
<div class="td" style="left:1261.5px;top:1147.1px">广西</div>
<div class="td" style="left:1261.5px;top:1204.7px">海南</div>
<div class="th" style="left:1477.5px">城市</div>
<svg style="left:1487.5px;top:400.5px" width="24" height="28" viewBox="0 0 24 28" fill="none" stroke="#5b8ff9" stroke-width="1.9" stroke-linecap="round" stroke-linejoin="round" ><path d="M12 25.6 C12 25.6 2.4 17.6 2.4 11.2 A9.6 9.6 0 0 1 21.6 11.2 C21.6 17.6 12 25.6 12 25.6 Z"/><circle cx="12" cy="11" r="3.5"/></svg>
<svg style="left:1615px;top:401.5px" width="26" height="26" viewBox="0 0 26 26" fill="none" stroke="#444444" stroke-width="1.9" stroke-linecap="round" stroke-linejoin="round" ><path d="M23.74 10.62 L23.74 15.38 L20.80 16.39 L19.83 18.06 L20.43 21.11 L16.31 23.49 L13.96 21.45 L12.04 21.45 L9.69 23.49 L5.57 21.11 L6.17 18.06 L5.20 16.39 L2.26 15.38 L2.26 10.62 L5.20 9.61 L6.17 7.94 L5.57 4.89 L9.69 2.51 L12.04 4.55 L13.96 4.55 L16.31 2.51 L20.43 4.89 L19.83 7.94 L20.80 9.61 Z" stroke-linejoin="round"/><circle cx="13" cy="13" r="3.5"/></svg>
<div class="td" style="left:1477.5px;top:455.9px">南宁</div>
<div class="td" style="left:1477.5px;top:513.5px">海口</div>
<div class="td" style="left:1477.5px;top:571.1px">天津</div>
<div class="td" style="left:1477.5px;top:628.7px">福州</div>
<div class="td" style="left:1477.5px;top:686.3px">乌鲁木齐</div>
<div class="td" style="left:1477.5px;top:743.9px">乌鲁木齐</div>
<div class="td" style="left:1477.5px;top:801.5px">郑州</div>
<div class="td" style="left:1477.5px;top:859.1px">汕头</div>
<div class="td" style="left:1477.5px;top:916.7px">汕头</div>
<div class="td" style="left:1477.5px;top:974.3px">汕头</div>
<div class="td" style="left:1477.5px;top:1031.9px">太原</div>
<div class="td" style="left:1477.5px;top:1089.5px">沈阳</div>
<div class="td" style="left:1477.5px;top:1147.1px">南宁</div>
<div class="td" style="left:1477.5px;top:1204.7px">海口</div>
<div class="th" style="left:1693.5px">产品类型</div>
<div class="str h" style="left:1702.5px;top:401px">Str<span style="font-size:14px;margin-left:-.6px">.</span></div>
<svg style="left:1831px;top:401.5px" width="26" height="26" viewBox="0 0 26 26" fill="none" stroke="#444444" stroke-width="1.9" stroke-linecap="round" stroke-linejoin="round" ><path d="M23.74 10.62 L23.74 15.38 L20.80 16.39 L19.83 18.06 L20.43 21.11 L16.31 23.49 L13.96 21.45 L12.04 21.45 L9.69 23.49 L5.57 21.11 L6.17 18.06 L5.20 16.39 L2.26 15.38 L2.26 10.62 L5.20 9.61 L6.17 7.94 L5.57 4.89 L9.69 2.51 L12.04 4.55 L13.96 4.55 L16.31 2.51 L20.43 4.89 L19.83 7.94 L20.80 9.61 Z" stroke-linejoin="round"/><circle cx="13" cy="13" r="3.5"/></svg>
<div class="td" style="left:1693.5px;top:455.9px">办公用品</div>
<div class="td" style="left:1693.5px;top:513.5px">技术产品</div>
<div class="td" style="left:1693.5px;top:571.1px">办公用品</div>
<div class="td" style="left:1693.5px;top:628.7px">办公用品</div>
<div class="td" style="left:1693.5px;top:686.3px">技术产品</div>
<div class="td" style="left:1693.5px;top:743.9px">家具产品</div>
<div class="td" style="left:1693.5px;top:801.5px">办公用品</div>
<div class="td" style="left:1693.5px;top:859.1px">技术产品</div>
<div class="td" style="left:1693.5px;top:916.7px">技术产品</div>
<div class="td" style="left:1693.5px;top:974.3px">办公用品</div>
<div class="td" style="left:1693.5px;top:1031.9px">家具产品</div>
<div class="td" style="left:1693.5px;top:1089.5px">办公用品</div>
<div class="td" style="left:1693.5px;top:1147.1px">办公用品</div>
<div class="td" style="left:1693.5px;top:1204.7px">办公用品</div>
<div class="th" style="left:1909.5px">产品名称</div>
<div class="str h" style="left:1918.5px;top:401px">Str<span style="font-size:14px;margin-left:-.6px">.</span></div>
<svg style="left:2047px;top:401.5px" width="26" height="26" viewBox="0 0 26 26" fill="none" stroke="#444444" stroke-width="1.9" stroke-linecap="round" stroke-linejoin="round" ><path d="M23.74 10.62 L23.74 15.38 L20.80 16.39 L19.83 18.06 L20.43 21.11 L16.31 23.49 L13.96 21.45 L12.04 21.45 L9.69 23.49 L5.57 21.11 L6.17 18.06 L5.20 16.39 L2.26 15.38 L2.26 10.62 L5.20 9.61 L6.17 7.94 L5.57 4.89 L9.69 2.51 L12.04 4.55 L13.96 4.55 L16.31 2.51 L20.43 4.89 L19.83 7.94 L20.80 9.61 Z" stroke-linejoin="round"/><circle cx="13" cy="13" r="3.5"/></svg>
<div class="td" style="left:1909.5px;top:455.9px;letter-spacing:-.1px">Kleencut_ Forg...</div>
<div class="td" style="left:1909.5px;top:513.5px;letter-spacing:-.1px">Kleencut_ Forg...</div>
<div class="td" style="left:1909.5px;top:571.1px;letter-spacing:-.1px">Kleencut_ Forg...</div>
<div class="td" style="left:1909.5px;top:628.7px;letter-spacing:-.1px">Kleencut_ Forg...</div>
<div class="td" style="left:1909.5px;top:686.3px;letter-spacing:-.1px">Kleencut_ Forg...</div>
<div class="td" style="left:1909.5px;top:743.9px;letter-spacing:-.1px">Kleencut_ Forg...</div>
<div class="td" style="left:1909.5px;top:801.5px;letter-spacing:-.1px">Kleencut_ Forg...</div>
<div class="td" style="left:1909.5px;top:859.1px;letter-spacing:-.1px">Kleencut_ Forg...</div>
<div class="td" style="left:1909.5px;top:916.7px;letter-spacing:-.1px">Kleencut_ Forg...</div>
<div class="td" style="left:1909.5px;top:974.3px;letter-spacing:-.1px">Kleencut_ Forg...</div>
<div class="td" style="left:1909.5px;top:1031.9px;letter-spacing:-.1px">Kleencut_ Forg...</div>
<div class="td" style="left:1909.5px;top:1089.5px;letter-spacing:-.1px">Kleencut_ Forg...</div>
<div class="td" style="left:1909.5px;top:1147.1px;letter-spacing:-.1px">Kleencut_ Forg...</div>
<div class="td" style="left:1909.5px;top:1204.7px;letter-spacing:-.1px">Kleencut_ Forg...</div>
<div class="th" style="left:2125.5px">包装方式</div>
<div class="str h" style="left:2134.5px;top:401px">Str<span style="font-size:14px;margin-left:-.6px">.</span></div>
<svg style="left:2263px;top:401.5px" width="26" height="26" viewBox="0 0 26 26" fill="none" stroke="#444444" stroke-width="1.9" stroke-linecap="round" stroke-linejoin="round" ><path d="M23.74 10.62 L23.74 15.38 L20.80 16.39 L19.83 18.06 L20.43 21.11 L16.31 23.49 L13.96 21.45 L12.04 21.45 L9.69 23.49 L5.57 21.11 L6.17 18.06 L5.20 16.39 L2.26 15.38 L2.26 10.62 L5.20 9.61 L6.17 7.94 L5.57 4.89 L9.69 2.51 L12.04 4.55 L13.96 4.55 L16.31 2.51 L20.43 4.89 L19.83 7.94 L20.80 9.61 Z" stroke-linejoin="round"/><circle cx="13" cy="13" r="3.5"/></svg>
<div class="td" style="left:2125.5px;top:455.9px">小型箱子</div>
<div class="td" style="left:2125.5px;top:513.5px">中型箱子</div>
<div class="td" style="left:2125.5px;top:571.1px">小型箱子</div>
<div class="td" style="left:2125.5px;top:628.7px">小型箱子</div>
<div class="td" style="left:2125.5px;top:686.3px">中型箱子</div>
<div class="td" style="left:2125.5px;top:743.9px">巨型纸箱</div>
<div class="td" style="left:2125.5px;top:801.5px">大型箱子</div>
<div class="td" style="left:2125.5px;top:859.1px">小型包裹</div>
<div class="td" style="left:2125.5px;top:916.7px">小型箱子</div>
<div class="td" style="left:2125.5px;top:974.3px">中型箱子</div>
<div class="td" style="left:2125.5px;top:1031.9px">打包纸袋</div>
<div class="td" style="left:2125.5px;top:1089.5px">打包纸袋</div>
<div class="td" style="left:2125.5px;top:1147.1px">打包纸袋</div>
<div class="td" style="left:2125.5px;top:1204.7px">小型包裹</div>
<div class="th" style="left:2341.5px">运输日期<span style="letter-spacing:-.1px">(ymdhms)</span></div>
<svg style="left:2343px;top:398px" width="26" height="26" viewBox="0 0 26 26" fill="none" stroke="#5b8ff9" stroke-width="1.9" stroke-linecap="round" stroke-linejoin="round" ><rect x="1.6" y="4.6" width="22.4" height="19" rx="2.4"/><path d="M1.6 10.6 H24 M7.6 1.4 V6.6 M18 1.4 V6.6"/><path d="M5.4 15.4 H20.4" stroke-dasharray="4 2.4" stroke-linecap="butt"/></svg>
<svg style="left:2506px;top:401.5px" width="26" height="26" viewBox="0 0 26 26" fill="none" stroke="#444444" stroke-width="1.9" stroke-linecap="round" stroke-linejoin="round" ><path d="M23.74 10.62 L23.74 15.38 L20.80 16.39 L19.83 18.06 L20.43 21.11 L16.31 23.49 L13.96 21.45 L12.04 21.45 L9.69 23.49 L5.57 21.11 L6.17 18.06 L5.20 16.39 L2.26 15.38 L2.26 10.62 L5.20 9.61 L6.17 7.94 L5.57 4.89 L9.69 2.51 L12.04 4.55 L13.96 4.55 L16.31 2.51 L20.43 4.89 L19.83 7.94 L20.80 9.61 Z" stroke-linejoin="round"/><circle cx="13" cy="13" r="3.5"/></svg>
<div class="td" style="left:2341.5px;top:455.9px;letter-spacing:.12px">20121127 00:00:00</div>
<div class="td" style="left:2341.5px;top:513.5px;letter-spacing:.12px">20120509 00:00:00</div>
<div class="td" style="left:2341.5px;top:571.1px;letter-spacing:.12px">20120510 00:00:00</div>
<div class="td" style="left:2341.5px;top:628.7px;letter-spacing:.12px">20120508 00:00:00</div>
<div class="td" style="left:2341.5px;top:686.3px;letter-spacing:.12px">20100611 00:00:00</div>
<div class="td" style="left:2341.5px;top:743.9px;letter-spacing:.12px">20100613 00:00:00</div>
<div class="td" style="left:2341.5px;top:801.5px;letter-spacing:.12px">20120502 00:00:00</div>
<div class="td" style="left:2341.5px;top:859.1px;letter-spacing:.12px">20111022 00:00:00</div>
<div class="td" style="left:2341.5px;top:916.7px;letter-spacing:.12px">20110913 00:00:00</div>
<div class="td" style="left:2341.5px;top:974.3px;letter-spacing:.12px">20100809 00:00:00</div>
<div class="td" style="left:2341.5px;top:1031.9px;letter-spacing:.12px">20120406 00:00:00</div>
<div class="td" style="left:2341.5px;top:1089.5px;letter-spacing:.12px">20120406 00:00:00</div>
<div class="td" style="left:2341.5px;top:1147.1px;letter-spacing:.12px">20101229 00:00:00</div>
<div class="td" style="left:2341.5px;top:1204.7px;letter-spacing:.12px">20110408 00:00:00</div>
<div class="th" style="left:2584.5px">产品小类</div>
<div class="str h" style="left:2593.5px;top:401px">Str<span style="font-size:14px;margin-left:-.6px">.</span></div>
<svg style="left:2722px;top:401.5px" width="26" height="26" viewBox="0 0 26 26" fill="none" stroke="#444444" stroke-width="1.9" stroke-linecap="round" stroke-linejoin="round" ><path d="M23.74 10.62 L23.74 15.38 L20.80 16.39 L19.83 18.06 L20.43 21.11 L16.31 23.49 L13.96 21.45 L12.04 21.45 L9.69 23.49 L5.57 21.11 L6.17 18.06 L5.20 16.39 L2.26 15.38 L2.26 10.62 L5.20 9.61 L6.17 7.94 L5.57 4.89 L9.69 2.51 L12.04 4.55 L13.96 4.55 L16.31 2.51 L20.43 4.89 L19.83 7.94 L20.80 9.61 Z" stroke-linejoin="round"/><circle cx="13" cy="13" r="3.5"/></svg>
<div class="td" style="left:2584.5px;top:455.9px">纸张</div>
<div class="td" style="left:2584.5px;top:513.5px">办公机器</div>
<div class="td" style="left:2584.5px;top:571.1px">容器，箱子</div>
<div class="td" style="left:2584.5px;top:628.7px">纸张</div>
<div class="td" style="left:2584.5px;top:686.3px">电话通信产品</div>
<div class="td" style="left:2584.5px;top:743.9px">书架</div>
<div class="td" style="left:2584.5px;top:801.5px">容器，箱子</div>
<div class="td" style="left:2584.5px;top:859.1px">电脑配件</div>
<div class="td" style="left:2584.5px;top:916.7px">电话通信产品</div>
<div class="td" style="left:2584.5px;top:974.3px">容器，箱子</div>
<div class="td" style="left:2584.5px;top:1031.9px">办公装饰品</div>
<div class="td" style="left:2584.5px;top:1089.5px">剪刀，尺子，锯</div>
<div class="td" style="left:2584.5px;top:1147.1px">笔、美术用品</div>
<div class="td" style="left:2584.5px;top:1204.7px">剪刀，尺子，锯</div>
<div class="th" style="left:2800.5px">付款</div>
<svg style="left:2802px;top:398px" width="26" height="26" viewBox="0 0 26 26" fill="none" stroke="#5b8ff9" stroke-width="1.9" stroke-linecap="round" stroke-linejoin="round" ><rect x="1.6" y="4.6" width="22.4" height="19" rx="2.4"/><path d="M1.6 10.6 H24 M7.6 1.4 V6.6 M18 1.4 V6.6"/><path d="M5.4 15.4 H20.4" stroke-dasharray="4 2.4" stroke-linecap="butt"/></svg>
<svg style="left:2938px;top:401.5px" width="26" height="26" viewBox="0 0 26 26" fill="none" stroke="#444444" stroke-width="1.9" stroke-linecap="round" stroke-linejoin="round" ><path d="M23.74 10.62 L23.74 15.38 L20.80 16.39 L19.83 18.06 L20.43 21.11 L16.31 23.49 L13.96 21.45 L12.04 21.45 L9.69 23.49 L5.57 21.11 L6.17 18.06 L5.20 16.39 L2.26 15.38 L2.26 10.62 L5.20 9.61 L6.17 7.94 L5.57 4.89 L9.69 2.51 L12.04 4.55 L13.96 4.55 L16.31 2.51 L20.43 4.89 L19.83 7.94 L20.80 9.61 Z" stroke-linejoin="round"/><circle cx="13" cy="13" r="3.5"/></svg>
<div class="td" style="left:2800.2px;top:454.5px;transform-origin:0 50%;transform:scaleX(1.72)">-</div>
<div class="td" style="left:2800.2px;top:512.1px;transform-origin:0 50%;transform:scaleX(1.72)">-</div>
<div class="td" style="left:2800.2px;top:569.7px;transform-origin:0 50%;transform:scaleX(1.72)">-</div>
<div class="td" style="left:2800.2px;top:627.3px;transform-origin:0 50%;transform:scaleX(1.72)">-</div>
<div class="td" style="left:2800.2px;top:684.9px;transform-origin:0 50%;transform:scaleX(1.72)">-</div>
<div class="td" style="left:2800.2px;top:742.5px;transform-origin:0 50%;transform:scaleX(1.72)">-</div>
<div class="td" style="left:2800.2px;top:800.1px;transform-origin:0 50%;transform:scaleX(1.72)">-</div>
<div class="td" style="left:2800.2px;top:857.7px;transform-origin:0 50%;transform:scaleX(1.72)">-</div>
<div class="td" style="left:2800.2px;top:915.3px;transform-origin:0 50%;transform:scaleX(1.72)">-</div>
<div class="td" style="left:2800.2px;top:972.9px;transform-origin:0 50%;transform:scaleX(1.72)">-</div>
<div class="td" style="left:2800.2px;top:1030.5px;transform-origin:0 50%;transform:scaleX(1.72)">-</div>
<div class="td" style="left:2800.2px;top:1088.1px;transform-origin:0 50%;transform:scaleX(1.72)">-</div>
<div class="td" style="left:2800.2px;top:1145.7px;transform-origin:0 50%;transform:scaleX(1.72)">-</div>
<div class="td" style="left:2800.2px;top:1203.3px;transform-origin:0 50%;transform:scaleX(1.72)">-</div>
</div>
<div class="t" style="left:559.5px;top:1276px;font-size:21.6px;color:#444444">总字段数 19</div>
<div class="abs" style="left:698.5px;top:1273px;width:1.5px;height:36px;background:#dedfe3"></div>
<div class="abs" style="left:743px;top:1284px;width:14px;height:14px;border-radius:1.5px;background:#5b8ff9"></div>
<div class="t" style="left:765px;top:1276px;font-size:21.6px;color:#444444">维度 14</div>
<div class="abs" style="left:889px;top:1284px;width:14px;height:14px;border-radius:1.5px;background:#3ccf6e"></div>
<div class="t" style="left:911px;top:1276px;font-size:21.6px;color:#444444">度量 5</div>
<div class="t" style="left:2622.5px;top:1276px;font-size:21.6px;color:#8f959e">最多预览前100行数据</div>
<div class="abs" style="left:106px;top:1298px;width:2746px;height:18px;background:linear-gradient(180deg,rgba(245,246,248,0),rgba(243,244,247,.75))"></div>
<div class="abs" style="left:2852px;top:1230px;width:66px;height:66px;border-radius:50%;background:linear-gradient(135deg,#3b78ff,#5f97ff);box-shadow:0 0 14px rgba(80,130,255,.35)"></div>
</body></html>
